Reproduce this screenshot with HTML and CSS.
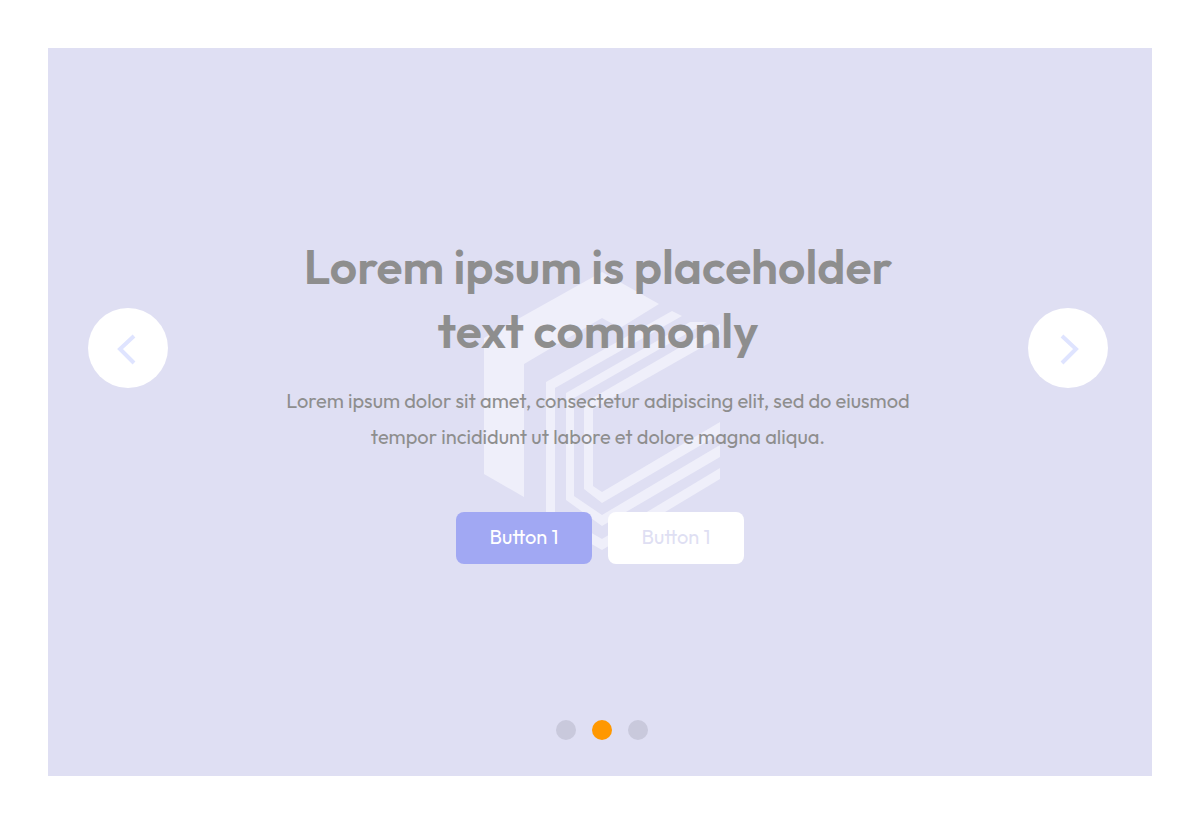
FILE: index.html
```html
<!DOCTYPE html>
<html lang="en">
<head>
<meta charset="utf-8">
<meta name="viewport" content="width=device-width, initial-scale=1">
<title>Hero carousel</title>
<link rel="stylesheet" href="styles.css">
</head>
<body>
<main class="carousel">
  <svg class="watermark" viewBox="484 272 236 280" aria-hidden="true">
    <path d="M484 338 602 272 659 304 620 328 602 318 524 364V497L484 474Z"/>
    <path d="M546 382 672 311 682 316 555 388V512L602 539 720 468V479L602 550 546 518Z"/>
    <path d="M566 393 690 322H707L574 398V496L602 515 720 445V457L602 526 566 500Z"/>
    <path d="M584 403 720 324V337L593 409V486L602 492 720 422V434L602 503 584 489Z"/>
  </svg>
  <button class="arrow" type="button" aria-label="Previous slide">
    <svg class="chevron" viewBox="0 0 80 80" aria-hidden="true"><path d="M46 28 32 41 46 55"/></svg>
  </button>
  <section class="slide">
    <h1 class="title">Lorem ipsum is placeholder text commonly</h1>
    <p class="text">Lorem ipsum dolor sit amet, consectetur adipiscing elit, sed do eiusmod tempor incididunt ut labore et dolore magna aliqua.</p>
    <div class="actions">
      <button class="btn btn-primary" type="button">Button 1</button>
      <button class="btn btn-light" type="button">Button 1</button>
    </div>
  </section>
  <button class="arrow" type="button" aria-label="Next slide">
    <svg class="chevron" viewBox="0 0 80 80" aria-hidden="true"><path d="M34 28 48 41 34 55"/></svg>
  </button>
  <nav class="dots" aria-label="Slides">
    <button class="dot" type="button" aria-label="Slide 1"></button>
    <button class="dot dot-active" type="button" aria-label="Slide 2" aria-current="true"></button>
    <button class="dot" type="button" aria-label="Slide 3"></button>
  </nav>
</main>
</body>
</html>
```
FILE: styles.css
```css
* {
  box-sizing: border-box;
}

body {
  margin: 0;
  padding: 48px 52px 52px 48px;
  min-height: 100vh;
  display: grid;
  background: #fff;
  font-family: Outfit, Lato, sans-serif;
}

button {
  font: inherit;
  border: 0;
  cursor: pointer;
}

.carousel {
  position: relative;
  isolation: isolate;
  display: grid;
  grid-template-columns: auto minmax(0, 640px) auto;
  grid-template-rows: 1fr auto;
  justify-content: space-between;
  padding: 186px 44px 36px 40px;
  background: #dfdff3;
}

.watermark {
  position: absolute;
  z-index: -1;
  top: 224px;
  left: calc(50% - 116px);
  width: 236px;
  height: 280px;
  fill: #efeffa;
}

.arrow {
  width: 80px;
  height: 80px;
  margin-top: 74px;
  padding: 0;
  border-radius: 50%;
  background: #fff;
}

.chevron {
  display: block;
  fill: none;
  stroke: #dfe4ff;
  stroke-width: 4;
}

.slide {
  text-align: center;
  color: #8e8e8e;
}

.title {
  margin: 0;
  font-size: 48px;
  line-height: 64px;
  font-weight: 600;
}

.text {
  margin: 21px 0 57px;
  font-size: 20px;
  line-height: 36px;
}

.actions {
  display: flex;
  justify-content: center;
  gap: 16px;
  padding-left: 4px;
}

.btn {
  width: 136px;
  height: 52px;
  padding: 0 0 3px;
  border-radius: 8px;
  font-size: 20px;
}

.btn-primary {
  background: #a1a8f3;
  color: #fff;
}

.btn-light {
  background: #fff;
  color: #dfdff3;
}

.dots {
  grid-column: 1 / -1;
  display: flex;
  justify-content: center;
  gap: 16px;
  padding-left: 8px;
}

.dot {
  width: 20px;
  height: 20px;
  padding: 0;
  border-radius: 50%;
  background: #c9c9dc;
}

.dot-active {
  background: #ff9800;
}
```
